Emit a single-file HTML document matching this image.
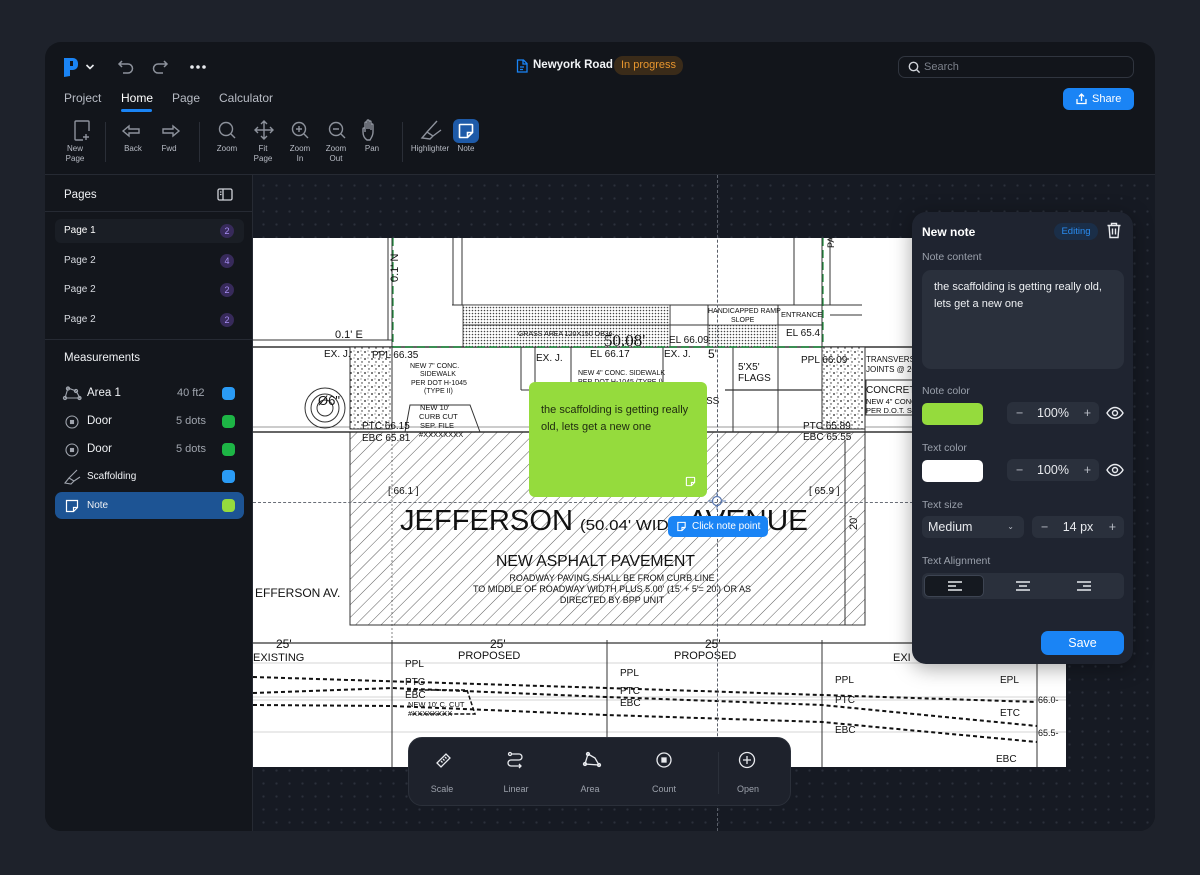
<!DOCTYPE html>
<html><head><meta charset="utf-8">
<style>
*{box-sizing:border-box;margin:0;padding:0}
body{width:1200px;height:875px;background:#1e222b;font-family:"Liberation Sans",sans-serif;position:relative;overflow:hidden;color:#e8eaee}
.app{position:absolute;left:45px;top:42px;width:1110px;height:789px;background:#12151b;border-radius:16px;overflow:hidden}
.abs{position:absolute}
.canvas{position:absolute;left:208px;top:133px;width:902px;height:656px;background-color:#161a23;background-image:radial-gradient(circle,#2b303b 1px,transparent 1.3px);background-size:13px 13px;background-position:4px 4px}
.hdr-line{position:absolute;left:0;top:132px;width:1110px;height:1px;background:#262a33}
.side{position:absolute;left:0;top:133px;width:208px;height:656px;background:#13161c;border-right:1px solid #262a33}
.tab{position:absolute;top:49px;font-size:12px;color:#b8bcc5}
.tl{position:absolute;font-size:8px;color:#b8bcc5;text-align:center;line-height:10px;width:40px}
.sep{position:absolute;top:80px;width:1px;height:40px;background:#2a2e37}
.row{position:absolute;left:10px;width:189px;height:24px;font-size:10px;color:#d7dae0;padding-left:9px;line-height:24px;border-radius:6px}
.badge{position:absolute;right:10px;top:5px;width:14px;height:14px;border-radius:50%;background:#372a5a;color:#a88ff5;font-size:9px;text-align:center;line-height:14px}
.mrow{position:absolute;left:10px;width:189px;height:27px;font-size:11px;color:#f0f2f5;line-height:27px;border-radius:7px}
.sw{position:absolute;right:9px;top:7px;width:13px;height:13px;border-radius:4px}
.lbl{position:absolute;left:10px;font-size:10.5px;color:#9aa0ab}
.stp{position:absolute;height:22px;background:#2a303c;border-radius:6px;color:#e8eaee;font-size:12.5px;text-align:center;line-height:22px}
.btb{position:absolute;top:46px;font-size:9px;color:#9ca1ab;text-align:center;width:60px}
</style></head><body>
<div class="app">
  <div class="canvas"></div>
  <svg class="abs" style="left:208px;top:196px" width="813" height="529" viewBox="253 238 813 529" font-family="Liberation Sans, sans-serif">
    <defs>
      <pattern id="h" width="9" height="9" patternUnits="userSpaceOnUse" patternTransform="rotate(45)"><line x1="0" y1="0" x2="0" y2="9" stroke="#333" stroke-width="0.8"/></pattern>
      <pattern id="dt" width="3" height="3" patternUnits="userSpaceOnUse"><rect width="3" height="3" fill="#fff"/><circle cx="1.5" cy="1.5" r="0.8" fill="#444"/></pattern>
      <pattern id="sp" width="7" height="7" patternUnits="userSpaceOnUse"><rect width="7" height="7" fill="#fff"/><circle cx="1" cy="2" r="0.9" fill="#222"/><circle cx="5" cy="5" r="0.7" fill="#222"/><circle cx="4" cy="1" r="0.5" fill="#222"/></pattern>
    </defs>
    <rect x="253" y="238" width="813" height="529" fill="#fff"/>
    <g stroke="#333" stroke-width="1" fill="none">
      <line x1="253" y1="347" x2="1066" y2="347" stroke-width="1.5"/>
      <line x1="253" y1="340" x2="392" y2="340"/>
      <line x1="253" y1="432" x2="1066" y2="432" stroke-width="1.5"/>
      <line x1="253" y1="427" x2="1066" y2="427" stroke-width="0.6"/>
      <line x1="392" y1="238" x2="392" y2="347"/>
      <line x1="388" y1="238" x2="388" y2="340"/>
      <line x1="453" y1="238" x2="453" y2="305"/>
      <line x1="462" y1="238" x2="462" y2="305"/>
      <line x1="794" y1="238" x2="794" y2="305"/>
      <line x1="822" y1="238" x2="822" y2="347"/>
      <line x1="830" y1="238" x2="830" y2="305"/>
      <line x1="452" y1="305" x2="862" y2="305"/>
      <line x1="830" y1="315" x2="862" y2="315"/>
      <line x1="670" y1="305" x2="670" y2="347"/>
      <line x1="708" y1="305" x2="708" y2="347"/>
      <line x1="778" y1="305" x2="778" y2="347"/>
      <line x1="670" y1="325" x2="708" y2="325"/>
      <line x1="778" y1="325" x2="822" y2="325"/>
      <line x1="535" y1="347" x2="535" y2="432"/>
      <line x1="571" y1="347" x2="571" y2="432"/>
      <line x1="521" y1="347" x2="521" y2="390"/>
      <line x1="663" y1="347" x2="663" y2="432"/>
      <line x1="733" y1="347" x2="733" y2="432"/>
      <line x1="778" y1="347" x2="778" y2="432"/>
      <line x1="725" y1="390" x2="865" y2="390" stroke-width="1.3"/>
      <line x1="521" y1="390" x2="535" y2="390"/>
      <line x1="1043" y1="347" x2="1043" y2="432"/>
      <polyline points="405,432 410,405 470,405 480,432"/>
      <line x1="865" y1="350" x2="865" y2="432"/>
      <rect x="866" y="380" width="60" height="35"/>
      <line x1="253" y1="643" x2="1066" y2="643" stroke-width="1.5" stroke="#555"/>
      <line x1="253" y1="663" x2="1066" y2="663" stroke="#aaa" stroke-width="0.6"/>
      <line x1="253" y1="697" x2="1066" y2="697" stroke="#aaa" stroke-width="0.6"/>
      <line x1="253" y1="700" x2="1066" y2="700" stroke="#aaa" stroke-width="0.6"/>
      <line x1="253" y1="732" x2="1066" y2="732" stroke="#aaa" stroke-width="0.6"/>
      <line x1="392" y1="640" x2="392" y2="767"/>
      <line x1="607" y1="640" x2="607" y2="767"/>
      <line x1="822" y1="640" x2="822" y2="767"/>
      <line x1="1037" y1="640" x2="1037" y2="767"/>
      <line x1="845" y1="440" x2="845" y2="625"/>
      <line x1="392" y1="432" x2="392" y2="640" stroke-dasharray="2 2" stroke-width="0.6"/>
    </g>
    <rect x="463" y="305" width="207" height="42" fill="url(#dt)" stroke="#333" stroke-width="0.8"/>
    <line x1="463" y1="325" x2="670" y2="325" stroke="#333"/>
    <rect x="708" y="325" width="70" height="22" fill="url(#dt)" stroke="#333" stroke-width="0.8"/>
    <rect x="350" y="347" width="42" height="82" fill="url(#sp)" stroke="#333"/>
    <rect x="822" y="347" width="43" height="82" fill="url(#sp)" stroke="#333"/>
    <rect x="350" y="432" width="515" height="193" fill="url(#h)" stroke="#333"/>
    <line x1="393" y1="347" x2="822" y2="347" stroke="#1a8a3a" stroke-width="1.6" stroke-dasharray="8 4"/>
    <line x1="393" y1="238" x2="393" y2="347" stroke="#1a8a3a" stroke-width="1.2" stroke-dasharray="8 4"/>
    <line x1="823" y1="238" x2="823" y2="347" stroke="#1a8a3a" stroke-width="1.2" stroke-dasharray="8 4"/>
    <g fill="none" stroke="#333"><circle cx="325" cy="408" r="20"/><circle cx="325" cy="408" r="14"/><circle cx="325" cy="408" r="8"/></g>
    <g stroke="#111" stroke-width="2" stroke-dasharray="4 3" fill="none">
      <polyline points="253,677 607,688 1037,702"/>
      <polyline points="253,693 392,688 607,697 822,705 1037,726"/>
      <polyline points="253,705 392,706 607,715 822,722 1037,742"/>
    </g>
    <polyline points="407,690 467,690 475,714 410,714" fill="none" stroke="#111" stroke-width="1.5" stroke-dasharray="4 2"/>
    <g fill="#111" font-size="10">
      <text x="388" y="298" transform="rotate(-90 385 285)" font-size="11">0.1' N</text>
      <text x="335" y="338" font-size="11">0.1' E</text>
      <text x="324" y="357">EX. J.</text><text x="372" y="358">PPL 66.35</text>
      <text x="410" y="368" font-size="7">NEW 7" CONC.</text><text x="420" y="376" font-size="7">SIDEWALK</text><text x="411" y="385" font-size="7">PER DOT H-1045</text><text x="424" y="393" font-size="7">(TYPE II)</text>
      <text x="420" y="410" font-size="7.5">NEW 10'</text><text x="419" y="419" font-size="7.5">CURB CUT</text><text x="420" y="428" font-size="7.5">SEP. FILE</text><text x="419" y="437" font-size="7.5">#XXXXXXXX</text>
      <text x="362" y="429">PTC 66.15</text><text x="362" y="441">EBC 65.81</text>
      <text x="318" y="405" font-size="13">Ø6"</text>
      <text x="518" y="336" font-size="7">GRASS AREA 120X150 OB36</text>
      <text x="604" y="346" font-size="17" font-family="Liberation Serif, serif">50.08'</text>
      <text x="669" y="343">EL 66.09</text><text x="590" y="357">EL 66.17</text>
      <text x="536" y="361">EX. J.</text><text x="664" y="357">EX. J.</text>
      <text x="708" y="313" font-size="7">HANDICAPPED RAMP</text><text x="731" y="322" font-size="7">SLOPE</text>
      <text x="781" y="317" font-size="7.5">ENTRANCE</text><text x="786" y="336">EL 65.4</text>
      <text x="708" y="358" font-size="12">5'</text>
      <text x="738" y="370">5'X5'</text><text x="738" y="381">FLAGS</text>
      <text x="578" y="375" font-size="7">NEW 4" CONC. SIDEWALK</text><text x="578" y="384" font-size="7">PER DOT H-1045 (TYPE I)</text>
      <text x="801" y="363">PPL 66.09</text>
      <text x="866" y="362" font-size="8">TRANSVERSE</text><text x="866" y="372" font-size="8">JOINTS @ 20'</text>
      <text x="866" y="393">CONCRETE</text><text x="866" y="404" font-size="7.5">NEW 4" CONC</text><text x="866" y="413" font-size="7.5">PER D.O.T. S</text>
      <text x="803" y="429">PTC 65.89</text><text x="803" y="440">EBC 65.55</text>
      <text x="706" y="404">SS</text>
      <text x="388" y="494">[ 66.1 ]</text><text x="809" y="494">[ 65.9 ]</text>
      <text x="400" y="530" font-size="29" textLength="173" lengthAdjust="spacingAndGlyphs">JEFFERSON</text>
      <text x="580" y="530" font-size="15" textLength="100" lengthAdjust="spacingAndGlyphs">(50.04' WIDE</text>
      <text x="688" y="530" font-size="29" textLength="120" lengthAdjust="spacingAndGlyphs">AVENUE</text>
      <text x="851" y="536" font-size="11" transform="rotate(-90 851 530)">20'</text>
      <text x="496" y="566" font-size="16" textLength="199" lengthAdjust="spacingAndGlyphs">NEW ASPHALT PAVEMENT</text>
      <text x="612" y="581" font-size="9" text-anchor="middle">ROADWAY PAVING SHALL BE FROM CURB LINE</text>
      <text x="612" y="592" font-size="9" text-anchor="middle">TO MIDDLE OF ROADWAY WIDTH PLUS 5.00' (15' + 5'= 20') OR AS</text>
      <text x="612" y="603" font-size="9" text-anchor="middle">DIRECTED BY BPP UNIT</text>
      <text x="255" y="597" font-size="12">EFFERSON AV.</text>
      <text x="276" y="648" font-size="12">25'</text><text x="490" y="648" font-size="12">25'</text><text x="705" y="648" font-size="12">25'</text>
      <text x="253" y="661" font-size="11">EXISTING</text>
      <text x="458" y="659" font-size="11">PROPOSED</text><text x="674" y="659" font-size="11">PROPOSED</text><text x="893" y="661" font-size="11">EXI</text>
      <text x="405" y="667">PPL</text><text x="405" y="685">PTC</text><text x="405" y="698">EBC</text>
      <text x="408" y="707" font-size="7.5">NEW 10' C. CUT</text><text x="408" y="716" font-size="7.5">#XXXXXXXX</text>
      <text x="620" y="676">PPL</text><text x="620" y="694">PTC</text><text x="620" y="706">EBC</text>
      <text x="835" y="683">PPL</text><text x="835" y="703">PTC</text><text x="835" y="733">EBC</text>
      <text x="1000" y="683">EPL</text><text x="1000" y="716">ETC</text><text x="996" y="762">EBC</text>
      <text x="1038" y="703" font-size="9">66.0-</text><text x="1038" y="736" font-size="9">65.5-</text>
      <text x="834" y="248" font-size="9" transform="rotate(-90 834 248)">PA</text>
    </g>
  </svg>
  <div class="abs" style="left:672px;top:133px;width:0;height:656px;border-left:1px dashed #5a5f69"></div>
  <div class="abs" style="left:208px;top:460px;width:660px;height:0;border-top:1px dashed #6a6f78"></div>

  <div class="abs" style="left:484px;top:340px;width:178px;height:115px;background:#95db3d;border-radius:6px;color:#1f2a10;font-size:11px;line-height:16.5px;padding:20px 12px">the scaffolding is getting really old, lets get a new one
    <svg class="abs" style="right:11px;bottom:10px" width="11" height="11" viewBox="0 0 12 12" fill="none" stroke="#fff" stroke-width="1.2"><path d="M2 1.5h8a.5.5 0 0 1 .5.5v5l-3.5 3.5H2a.5.5 0 0 1-.5-.5V2a.5.5 0 0 1 .5-.5zM10.5 7H7v3.5"/></svg>
  </div>
  <svg class="abs" style="left:663px;top:450px" width="18" height="18"><circle cx="9" cy="9" r="4.5" fill="none" stroke="#5a78b0" stroke-width="1.3"/><path d="M9 0v5M9 13v5M0 9h5M13 9h5" stroke="#5a78b0"/></svg>
  <div class="abs" style="left:623px;top:474px;width:100px;height:21px;background:#1a84f5;border-radius:5px;color:#fff;font-size:10px;line-height:21px;padding-left:24px">Click note point
    <svg class="abs" style="left:8px;top:5px" width="11" height="11" viewBox="0 0 12 12" fill="none" stroke="#fff" stroke-width="1.2"><path d="M2 1.5h8v5.5l-3.5 3.5H2zM10 7H6.5v3.5"/></svg>
  </div>

  <svg class="abs" style="left:17px;top:14px" width="18" height="22" viewBox="0 0 18 22"><path d="M2 2h9a5 5 0 0 1 5 5v2a5 5 0 0 1-5 5H8v6l-6 1z" fill="#1a84f5"/><rect x="8" y="5" width="3" height="5" fill="#12151b"/></svg>
  <svg class="abs" style="left:40px;top:21px" width="10" height="8"><path d="M1.5 2l3.5 3.5L8.5 2" stroke="#e8eaee" stroke-width="1.6" fill="none"/></svg>
  <svg class="abs" style="left:72px;top:16px" width="18" height="16" fill="none" stroke="#8d929c" stroke-width="1.5"><path d="M5 3L2 6l3 3M2 6h9a4.5 4.5 0 0 1 0 9H6"/></svg>
  <svg class="abs" style="left:106px;top:16px" width="18" height="16" fill="none" stroke="#8d929c" stroke-width="1.5"><path d="M13 3l3 3-3 3M16 6H7a4.5 4.5 0 0 0 0 9h5"/></svg>
  <svg class="abs" style="left:144px;top:22px" width="18" height="6" fill="#e8eaee"><circle cx="3" cy="3" r="1.8"/><circle cx="9" cy="3" r="1.8"/><circle cx="15" cy="3" r="1.8"/></svg>
  <div class="tab" style="left:19px">Project</div>
  <div class="tab" style="left:76px;color:#fff">Home</div>
  <div class="abs" style="left:76px;top:67px;width:31px;height:3px;background:#1a84f5;border-radius:2px"></div>
  <div class="tab" style="left:127px">Page</div>
  <div class="tab" style="left:174px">Calculator</div>
  <svg class="abs" style="left:0;top:76px" width="450" height="28" fill="none" stroke="#8d929c" stroke-width="1.4">
    <path d="M30 18V4a1 1 0 0 1 1-1h12a1 1 0 0 1 1 1v9M30 18v3a1 1 0 0 0 1 1h7M41 16v6M38 19h6"/>
    <path d="M78 13l6-5v3h10v4H84v3z"/>
    <path d="M134 13l-6-5v3h-10v4h10v3z"/>
    <circle cx="181" cy="11" r="6.5"/><path d="M186 16l4 4"/>
    <path d="M219 3v18M210 12h18M216 6l3-3 3 3M216 18l3 3 3-3M213 9l-3 3 3 3M225 9l3 3-3 3"/>
    <circle cx="254" cy="11" r="6.5"/><path d="M259 16l4 4M251 11h6M254 8v6"/>
    <circle cx="291" cy="11" r="6.5"/><path d="M296 16l4 4M288 11h6"/>
    <path d="M322 22c-3-2-4-5-4-8v-3a1 1 0 0 1 2 0v3V5a1 1 0 0 1 2 0v6V3a1 1 0 0 1 2 0v8V4a1 1 0 0 1 2 0v8V7a1 1 0 0 1 2 0v7c0 4-2 6-3 8z"/>
    <path d="M377 20l5-6 6 4-3 3zM382 14l10-11M388 18l8-6"/>
  </svg>
  <div class="abs" style="left:408px;top:77px;width:26px;height:24px;background:#1e5aa8;border-radius:6px"></div>
  <svg class="abs" style="left:412px;top:80px" width="18" height="18" fill="none" stroke="#fff" stroke-width="1.6"><path d="M3 2.5h12a.5.5 0 0 1 .5.5v7.5l-5 5H3a.5.5 0 0 1-.5-.5V3a.5.5 0 0 1 .5-.5zM15.5 10.5H10.5v5"/></svg>
  <div class="tl" style="left:10px;top:102px">New<br>Page</div>
  <div class="tl" style="left:68px;top:102px">Back</div>
  <div class="tl" style="left:104px;top:102px">Fwd</div>
  <div class="tl" style="left:162px;top:102px">Zoom</div>
  <div class="tl" style="left:198px;top:102px">Fit<br>Page</div>
  <div class="tl" style="left:235px;top:102px">Zoom<br>In</div>
  <div class="tl" style="left:271px;top:102px">Zoom<br>Out</div>
  <div class="tl" style="left:307px;top:102px">Pan</div>
  <div class="tl" style="left:365px;top:102px;width:40px">Highlighter</div>
  <div class="tl" style="left:401px;top:102px">Note</div>
  <div class="sep" style="left:60px"></div><div class="sep" style="left:154px"></div><div class="sep" style="left:357px"></div>

  <svg class="abs" style="left:471px;top:17px" width="12" height="14" fill="none" stroke="#1a84f5" stroke-width="1.3"><path d="M1.5 1h6l3.5 3.5v8.5h-9.5zM7 1v4h4M4 8h4M4 10.5h3"/></svg>
  <div class="abs" style="left:488px;top:17px;font-size:11.5px;font-weight:bold;color:#f2f4f7">Newyork Road</div>
  <div class="abs" style="left:569px;top:14px;width:69px;height:19px;border-radius:9px;background:#3a2b19;color:#e8962e;font-size:11px;line-height:19px;text-align:center">In progress</div>
  <div class="abs" style="left:853px;top:14px;width:236px;height:22px;border:1px solid #30353f;border-radius:7px;font-size:11px;color:#7c818b;line-height:20px;padding-left:25px">Search
    <svg class="abs" style="left:9px;top:4px" width="13" height="13" fill="none" stroke="#d0d3d9" stroke-width="1.4"><circle cx="5.5" cy="5.5" r="4.2"/><path d="M8.6 8.6l3 3"/></svg>
  </div>
  <div class="abs" style="left:1018px;top:46px;width:71px;height:22px;border-radius:6px;background:#1a84f5;color:#fff;font-size:11px;line-height:22px;padding-left:29px">Share
    <svg class="abs" style="left:12px;top:5px" width="13" height="12" fill="none" stroke="#fff" stroke-width="1.3"><path d="M6.5 8V1M4 3.5l2.5-2.5L9 3.5M2 6v4.5h9V6"/></svg>
  </div>
  <div class="hdr-line"></div>

  <div class="side">
    <div class="abs" style="left:19px;top:14px;font-size:11.5px;color:#f0f2f5">Pages</div>
    <svg class="abs" style="left:172px;top:13px" width="16" height="14" fill="none" stroke="#d0d3d9" stroke-width="1.3"><rect x="1" y="1" width="14" height="11" rx="1.5"/><path d="M6 1v11M3 4h1.5M3 6.5h1.5"/></svg>
    <div class="abs" style="left:0;top:36px;width:207px;height:1px;background:#262a33"></div>
    <div class="row" style="top:44px;background:#1a1e25;color:#fff">Page 1<span class="badge">2</span></div>
    <div class="row" style="top:74px">Page 2<span class="badge">4</span></div>
    <div class="row" style="top:103px">Page 2<span class="badge">2</span></div>
    <div class="row" style="top:133px">Page 2<span class="badge">2</span></div>
    <div class="abs" style="left:0;top:164px;width:207px;height:1px;background:#262a33"></div>
    <div class="abs" style="left:19px;top:177px;font-size:11.5px;color:#f0f2f5">Measurements</div>
    <div class="mrow" style="top:205px"><svg class="abs" style="left:7px;top:6px" width="20" height="15" fill="none" stroke="#a0a5ae" stroke-width="1.1"><path d="M3 12l3-10 8 3 4 7z"/><circle cx="3" cy="12" r="1.6"/><circle cx="6" cy="2.5" r="1.6"/><circle cx="14" cy="5" r="1.6"/><circle cx="17.5" cy="12" r="1.6"/></svg><span style="position:absolute;left:32px;font-size:11.5px">Area 1</span><span style="position:absolute;left:122px;color:#a0a5ae">40 ft2</span><span class="sw" style="background:#2a9bf5"></span></div>
    <div class="mrow" style="top:233px"><svg class="abs" style="left:10px;top:7px" width="14" height="14" fill="none" stroke="#a0a5ae" stroke-width="1.1"><circle cx="7" cy="7" r="6"/><rect x="5.5" y="5.5" width="3" height="3" fill="#a0a5ae"/></svg><span style="position:absolute;left:32px;font-size:11.5px">Door</span><span style="position:absolute;left:121px;color:#a0a5ae">5 dots</span><span class="sw" style="background:#1db545"></span></div>
    <div class="mrow" style="top:261px"><svg class="abs" style="left:10px;top:7px" width="14" height="14" fill="none" stroke="#a0a5ae" stroke-width="1.1"><circle cx="7" cy="7" r="6"/><rect x="5.5" y="5.5" width="3" height="3" fill="#a0a5ae"/></svg><span style="position:absolute;left:32px;font-size:11.5px">Door</span><span style="position:absolute;left:121px;color:#a0a5ae">5 dots</span><span class="sw" style="background:#1db545"></span></div>
    <div class="mrow" style="top:288px;font-size:10px"><svg class="abs" style="left:8px;top:6px" width="18" height="16" fill="none" stroke="#a0a5ae" stroke-width="1.1"><path d="M2 14l4-5 5 3-3 3zM6 9l8-8M11 12l6-4"/></svg><span style="position:absolute;left:32px">Scaffolding</span><span class="sw" style="background:#2a9bf5"></span></div>
    <div class="mrow" style="top:317px;background:#1d5494;font-size:10px"><svg class="abs" style="left:10px;top:7px" width="14" height="14" fill="none" stroke="#fff" stroke-width="1.2"><path d="M1.5 1.5h11v7l-4 4h-7zM12.5 8.5h-4v4"/></svg><span style="position:absolute;left:32px">Note</span><span class="sw" style="background:#95db3d"></span></div>
  </div>

  <div class="abs" style="left:363px;top:695px;width:383px;height:69px;background:#1e222c;border:1px solid #2b303a;border-radius:14px">
    <div class="abs" style="left:309px;top:14px;width:1px;height:42px;background:#2b303a"></div>
    <svg class="abs" style="left:0;top:12px" width="383" height="20" fill="none" stroke="#e8eaee" stroke-width="1.3">
      <path d="M28 13l9-9 4 4-9 9zM32 11l1.5 1.5M34 9l1.5 1.5M36 7l1.5 1.5"/>
      <path d="M102 4h8a3 3 0 0 1 0 6h-8a3 3 0 0 0 0 6h10M110 14l2 2-2 2"/><circle cx="101" cy="4" r="1.5"/>
      <path d="M176 14l3-10 7 4 4 7z"/><circle cx="176" cy="14" r="1.5"/><circle cx="179" cy="4" r="1.5"/><circle cx="190" cy="15" r="1.5"/>
      <circle cx="255" cy="10" r="7"/><rect x="253" y="8" width="4" height="4" fill="#e8eaee"/>
      <circle cx="338" cy="10" r="7.5"/><path d="M338 6v8M334 10h8"/>
    </svg>
    <div class="btb" style="left:3px">Scale</div><div class="btb" style="left:77px">Linear</div><div class="btb" style="left:151px">Area</div><div class="btb" style="left:225px">Count</div><div class="btb" style="left:309px">Open</div>
  </div>

  <div class="abs" style="left:867px;top:170px;width:221px;height:452px;background:#1f2430;border-radius:14px;box-shadow:0 4px 20px rgba(0,0,0,.35)">
    <div class="abs" style="left:10px;top:13px;font-size:12px;font-weight:bold;color:#fff">New note</div>
    <div class="abs" style="left:142px;top:11px;width:44px;height:17px;border-radius:9px;background:#1a2e48;color:#2a8cf0;font-size:9.5px;text-align:center;line-height:17px">Editing</div>
    <svg class="abs" style="left:194px;top:10px" width="16" height="17" fill="none" stroke="#e8eaee" stroke-width="1.4"><path d="M1.5 3.5h13M5.5 3.5V1.5h5v2M3 3.5l1 12h8l1-12M6.5 6.5v6M9.5 6.5v6"/></svg>
    <div class="lbl" style="top:39px">Note content</div>
    <div class="abs" style="left:10px;top:58px;width:202px;height:99px;background:#2a303c;border-radius:9px;padding:9px 12px;font-size:11px;line-height:16.5px;color:#eef0f3">the scaffolding is getting really old, lets get a new one</div>
    <div class="lbl" style="top:173px">Note color</div>
    <div class="abs" style="left:10px;top:191px;width:61px;height:22px;border-radius:5px;background:#95db3d"></div>
    <div class="stp" style="left:95px;top:190px;width:92px"><span style="position:absolute;left:9px;color:#b8bcc5">−</span>100%<span style="position:absolute;right:8px;color:#b8bcc5">+</span></div>
    <svg class="abs" style="left:194px;top:194px" width="18" height="14" fill="none" stroke="#e8eaee" stroke-width="1.4"><path d="M1 7s3-5.5 8-5.5S17 7 17 7s-3 5.5-8 5.5S1 7 1 7z"/><circle cx="9" cy="7" r="2.5"/></svg>
    <div class="lbl" style="top:230px">Text color</div>
    <div class="abs" style="left:10px;top:248px;width:61px;height:22px;border-radius:5px;background:#fff"></div>
    <div class="stp" style="left:95px;top:247px;width:92px"><span style="position:absolute;left:9px;color:#b8bcc5">−</span>100%<span style="position:absolute;right:8px;color:#b8bcc5">+</span></div>
    <svg class="abs" style="left:194px;top:251px" width="18" height="14" fill="none" stroke="#e8eaee" stroke-width="1.4"><path d="M1 7s3-5.5 8-5.5S17 7 17 7s-3 5.5-8 5.5S1 7 1 7z"/><circle cx="9" cy="7" r="2.5"/></svg>
    <div class="lbl" style="top:287px">Text size</div>
    <div class="stp" style="left:10px;top:304px;width:102px;text-align:left;padding-left:6px">Medium<span style="position:absolute;right:10px;font-size:8px;color:#b8bcc5">⌄</span></div>
    <div class="stp" style="left:120px;top:304px;width:92px"><span style="position:absolute;left:9px;color:#b8bcc5">−</span>14 px<span style="position:absolute;right:8px;color:#b8bcc5">+</span></div>
    <div class="lbl" style="top:343px">Text Alignment</div>
    <div class="abs" style="left:10px;top:361px;width:202px;height:26px;background:#2a303c;border-radius:6px"></div>
    <div class="abs" style="left:12px;top:363px;width:60px;height:22px;background:#151920;border:1px solid #3d4452;border-radius:5px"></div>
    <svg class="abs" style="left:0;top:368px" width="221" height="12" stroke="#e8eaee" stroke-width="1.4"><path d="M36 2h14M36 6h8M36 10h14M104 2h14M107 6h8M104 10h14M165 2h14M171 6h8M165 10h14"/></svg>
    <div class="abs" style="left:129px;top:419px;width:83px;height:24px;border-radius:7px;background:#1a84f5;color:#fff;font-size:12.5px;line-height:24px;text-align:center">Save</div>
  </div>
</div>
</body></html>
